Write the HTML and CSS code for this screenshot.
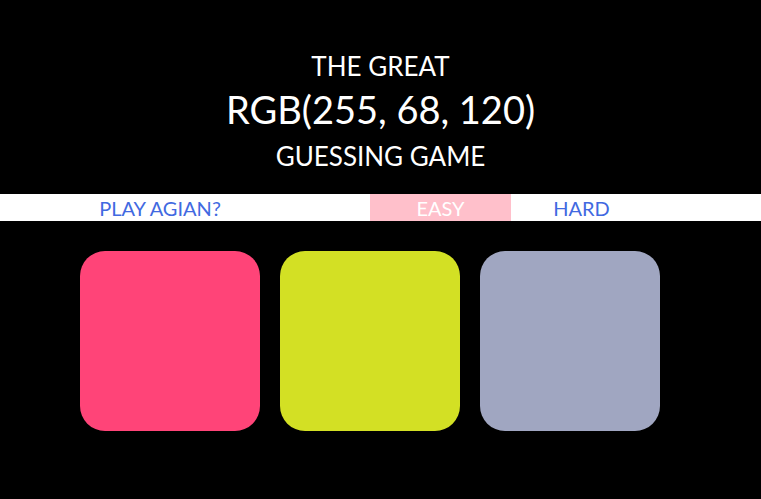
FILE: index.html
```html
<!DOCTYPE html>
<html lang="en">
<head>
<meta charset="UTF-8" />
<title>Color Game</title>
<link rel="stylesheet" href="styles.css">
</head>
<body>
<h1>
  <span class="small">THE GREAT</span>
  <span id="colorDisplay" class="big">RGB(255, 68, 120)</span>
  <span class="small">GUESSING GAME</span>
</h1>

<div class="stripe">
  <div class="stripe-inner">
    <button id="reset">PLAY AGIAN?</button>
    <button class="mode selected">EASY</button>
    <button class="mode">HARD</button>
  </div>
</div>

<div id="container">
  <div class="square" style="background: rgb(255, 68, 120);"></div>
  <div class="square" style="background: rgb(211, 224, 36);"></div>
  <div class="square" style="background: rgb(160, 166, 193);"></div>
</div>
</body>
</html>
```

FILE: styles.css
```css
body {
  background: #000;
  margin: 0;
  font-family: Lato, "Open Sans", sans-serif;
}
h1 {
  margin: 0;
  padding: 49px 0 21px;
  color: #fff;
  text-align: center;
  font-weight: normal;
}
h1 span {
  display: block;
}
.small {
  font-size: 26px;
  line-height: 34px;
}
.big {
  font-size: 38px;
  line-height: 56px;
  margin: -2px 0 2px;
}
.stripe {
  background: #fff;
  height: 27px;
}
.stripe-inner {
  width: 600px;
  margin: 0 auto;
  display: flex;
  height: 100%;
  position: relative;
  left: -0.5px;
}
button {
  border: none;
  background: none;
  color: royalblue;
  font-family: Lato, "Open Sans", sans-serif;
  font-size: 20px;
  padding: 0;
  height: 100%;
  outline: none;
  cursor: pointer;
}
#reset {
  width: 160px;
  margin-right: 130px;
}
.mode {
  width: 141px;
}
.selected {
  background: pink;
  color: #fff;
}
#container {
  width: 600px;
  margin: 30px auto 0;
  display: flex;
  gap: 20px;
  position: relative;
  left: -0.5px;
}
.square {
  width: 180px;
  height: 180px;
  border-radius: 25px;
}
```
